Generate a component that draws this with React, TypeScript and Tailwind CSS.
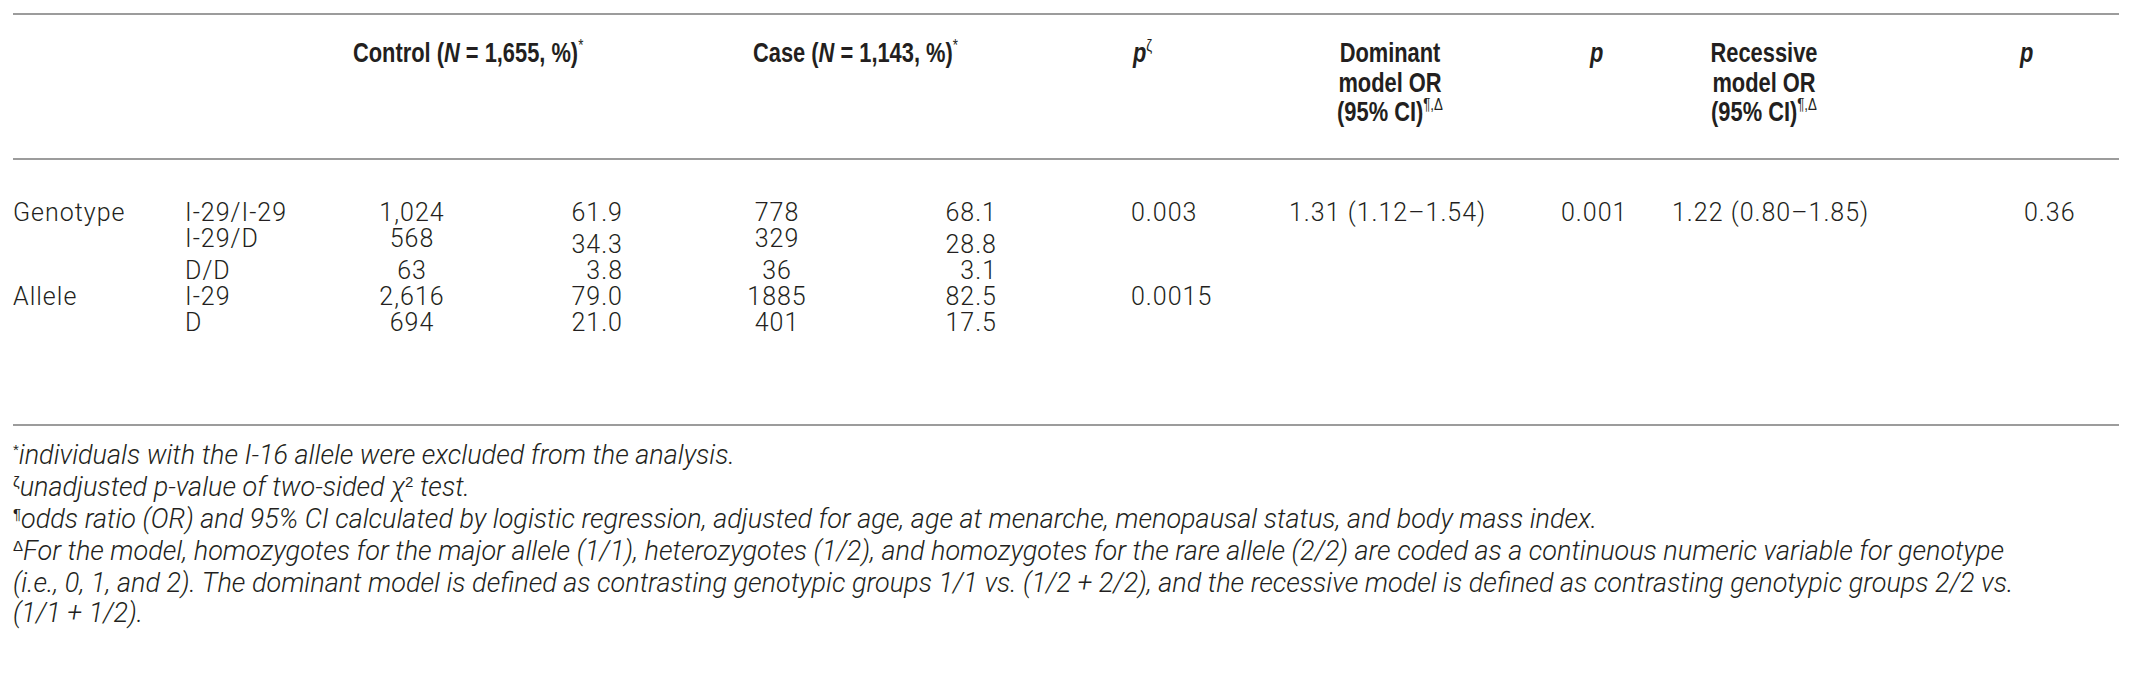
import React from "react";

type Row = {
  a?: string;
  b: string;
  c: string;
  d: string;
  e: string;
  f: string;
  g?: string;
  h?: string;
  i?: string;
  j?: string;
  k?: string;
  tall?: boolean;
};

const rows: Row[] = [
  { a: "Genotype", b: "I-29/I-29", c: "1,024", d: "61.9", e: "778", f: "68.1", g: "0.003", h: "1.31 (1.12–1.54)", i: "0.001", j: "1.22 (0.80–1.85)", k: "0.36" },
  { b: "I-29/D", c: "568", d: "34.3", e: "329", f: "28.8", tall: true },
  { b: "D/D", c: "63", d: "3.8", e: "36", f: "3.1" },
  { a: "Allele", b: "I-29", c: "2,616", d: "79.0", e: "1885", f: "82.5", g: "0.0015" },
  { b: "D", c: "694", d: "21.0", e: "401", f: "17.5" },
];

function Sup({ children }: { children: React.ReactNode }) {
  return <span className="relative -top-[11px] text-[17px] font-normal not-italic">{children}</span>;
}

function FSup({ children }: { children: React.ReactNode }) {
  return (
    <span className="relative -top-[9px] text-[15px] not-italic font-['Liberation_Sans',sans-serif] font-normal">
      {children}
    </span>
  );
}

export default function App() {
  return (
    <div className="w-[2138px] h-[676px] bg-white text-[#231f20] overflow-hidden">
      <div className="ml-[13px] w-[2106px] pt-[13px]">
        <div className="border-t-2 border-[#9c9c9c]" />
        {/* header */}
        <div className="flex font-['Liberation_Sans',sans-serif] font-bold text-[28px] leading-[29.5px] pt-[23px] pb-[27px] whitespace-nowrap">
          <div className="w-[340px]" />
          <div className="w-[400px]">
            <span className="inline-block origin-left scale-x-[0.78]">
              Control (<i>N</i> = 1,655, %)<Sup>*</Sup>
            </span>
          </div>
          <div className="w-[378px]">
            <span className="inline-block origin-left scale-x-[0.78]">
              Case (<i>N</i> = 1,143, %)<Sup>*</Sup>
            </span>
          </div>
          <div className="w-[159px] pl-[2px]">
            <span className="inline-block origin-left scale-x-[0.78]">
              <i>p</i>
              <Sup>ζ</Sup>
            </span>
          </div>
          <div className="w-[200px] text-center origin-center scale-x-[0.78]">
            Dominant
            <br />
            model OR
            <br />
            (95% CI)<Sup>¶,Δ</Sup>
          </div>
          <div className="w-[174px] pl-[100px]">
            <span className="inline-block origin-left scale-x-[0.78]">
              <i>p</i>
            </span>
          </div>
          <div className="w-[200px] text-center origin-center scale-x-[0.78]">
            Recessive
            <br />
            model OR
            <br />
            (95% CI)<Sup>¶,Δ</Sup>
          </div>
          <div className="w-[255px] pl-[156px]">
            <span className="inline-block origin-left scale-x-[0.78]">
              <i>p</i>
            </span>
          </div>
        </div>
        <div className="border-t-2 border-[#9c9c9c]" />
        {/* body */}
        <div className="pt-[40px] pb-[88px] font-['Roboto','Liberation_Sans',sans-serif] font-light text-[25px] tracking-[1px] leading-[26px] whitespace-nowrap">
          {rows.map((r, idx) => (
            <div key={idx} className={r.tall ? "flex h-[32px]" : "flex h-[26px]"}>
              <div className="w-[172px]">{r.a ?? ""}</div>
              <div className="w-[145px]">{r.b}</div>
              <div className="w-[164px] text-center">{r.c}</div>
              <div className={r.tall ? "w-[129px] text-right pt-[6px]" : "w-[129px] text-right"}>{r.d}</div>
              <div className="w-[190px] ml-[59px] text-center">{r.e}</div>
              <div className={r.tall ? "w-[125px] text-right pt-[6px]" : "w-[125px] text-right"}>{r.f}</div>
              <div className="w-[292px] pl-[134px]">{r.g ?? ""}</div>
              <div className="w-[272px]">{r.h ?? ""}</div>
              <div className="w-[111px]">{r.i ?? ""}</div>
              <div className="w-[352px]">{r.j ?? ""}</div>
              <div className="w-[95px]">{r.k ?? ""}</div>
            </div>
          ))}
        </div>
        <div className="border-t-2 border-[#9c9c9c]" />
        {/* footnotes */}
        <div className="pt-[15px] font-['Roboto','Liberation_Sans',sans-serif] font-light italic text-[27px] leading-[29.2px] whitespace-nowrap">
          <div>
            <FSup>*</FSup>individuals with the I-16 allele were excluded from the analysis.
          </div>
          <div>
            <FSup>ζ</FSup>unadjusted p-value of two-sided χ<FSup>2</FSup> test.
          </div>
          <div>
            <FSup>¶</FSup>odds ratio (OR) and 95% CI calculated by logistic regression, adjusted for age, age at menarche, menopausal status, and body mass index.
          </div>
          <div>
            <FSup>Δ</FSup>For the model, homozygotes for the major allele (1/1), heterozygotes (1/2), and homozygotes for the rare allele (2/2) are coded as a continuous numeric variable for genotype
          </div>
          <div>
            (i.e., 0, 1, and 2). The dominant model is defined as contrasting genotypic groups 1/1 vs. (1/2 + 2/2), and the recessive model is defined as contrasting genotypic groups 2/2 vs.
          </div>
          <div>(1/1 + 1/2).</div>
        </div>
      </div>
    </div>
  );
}
